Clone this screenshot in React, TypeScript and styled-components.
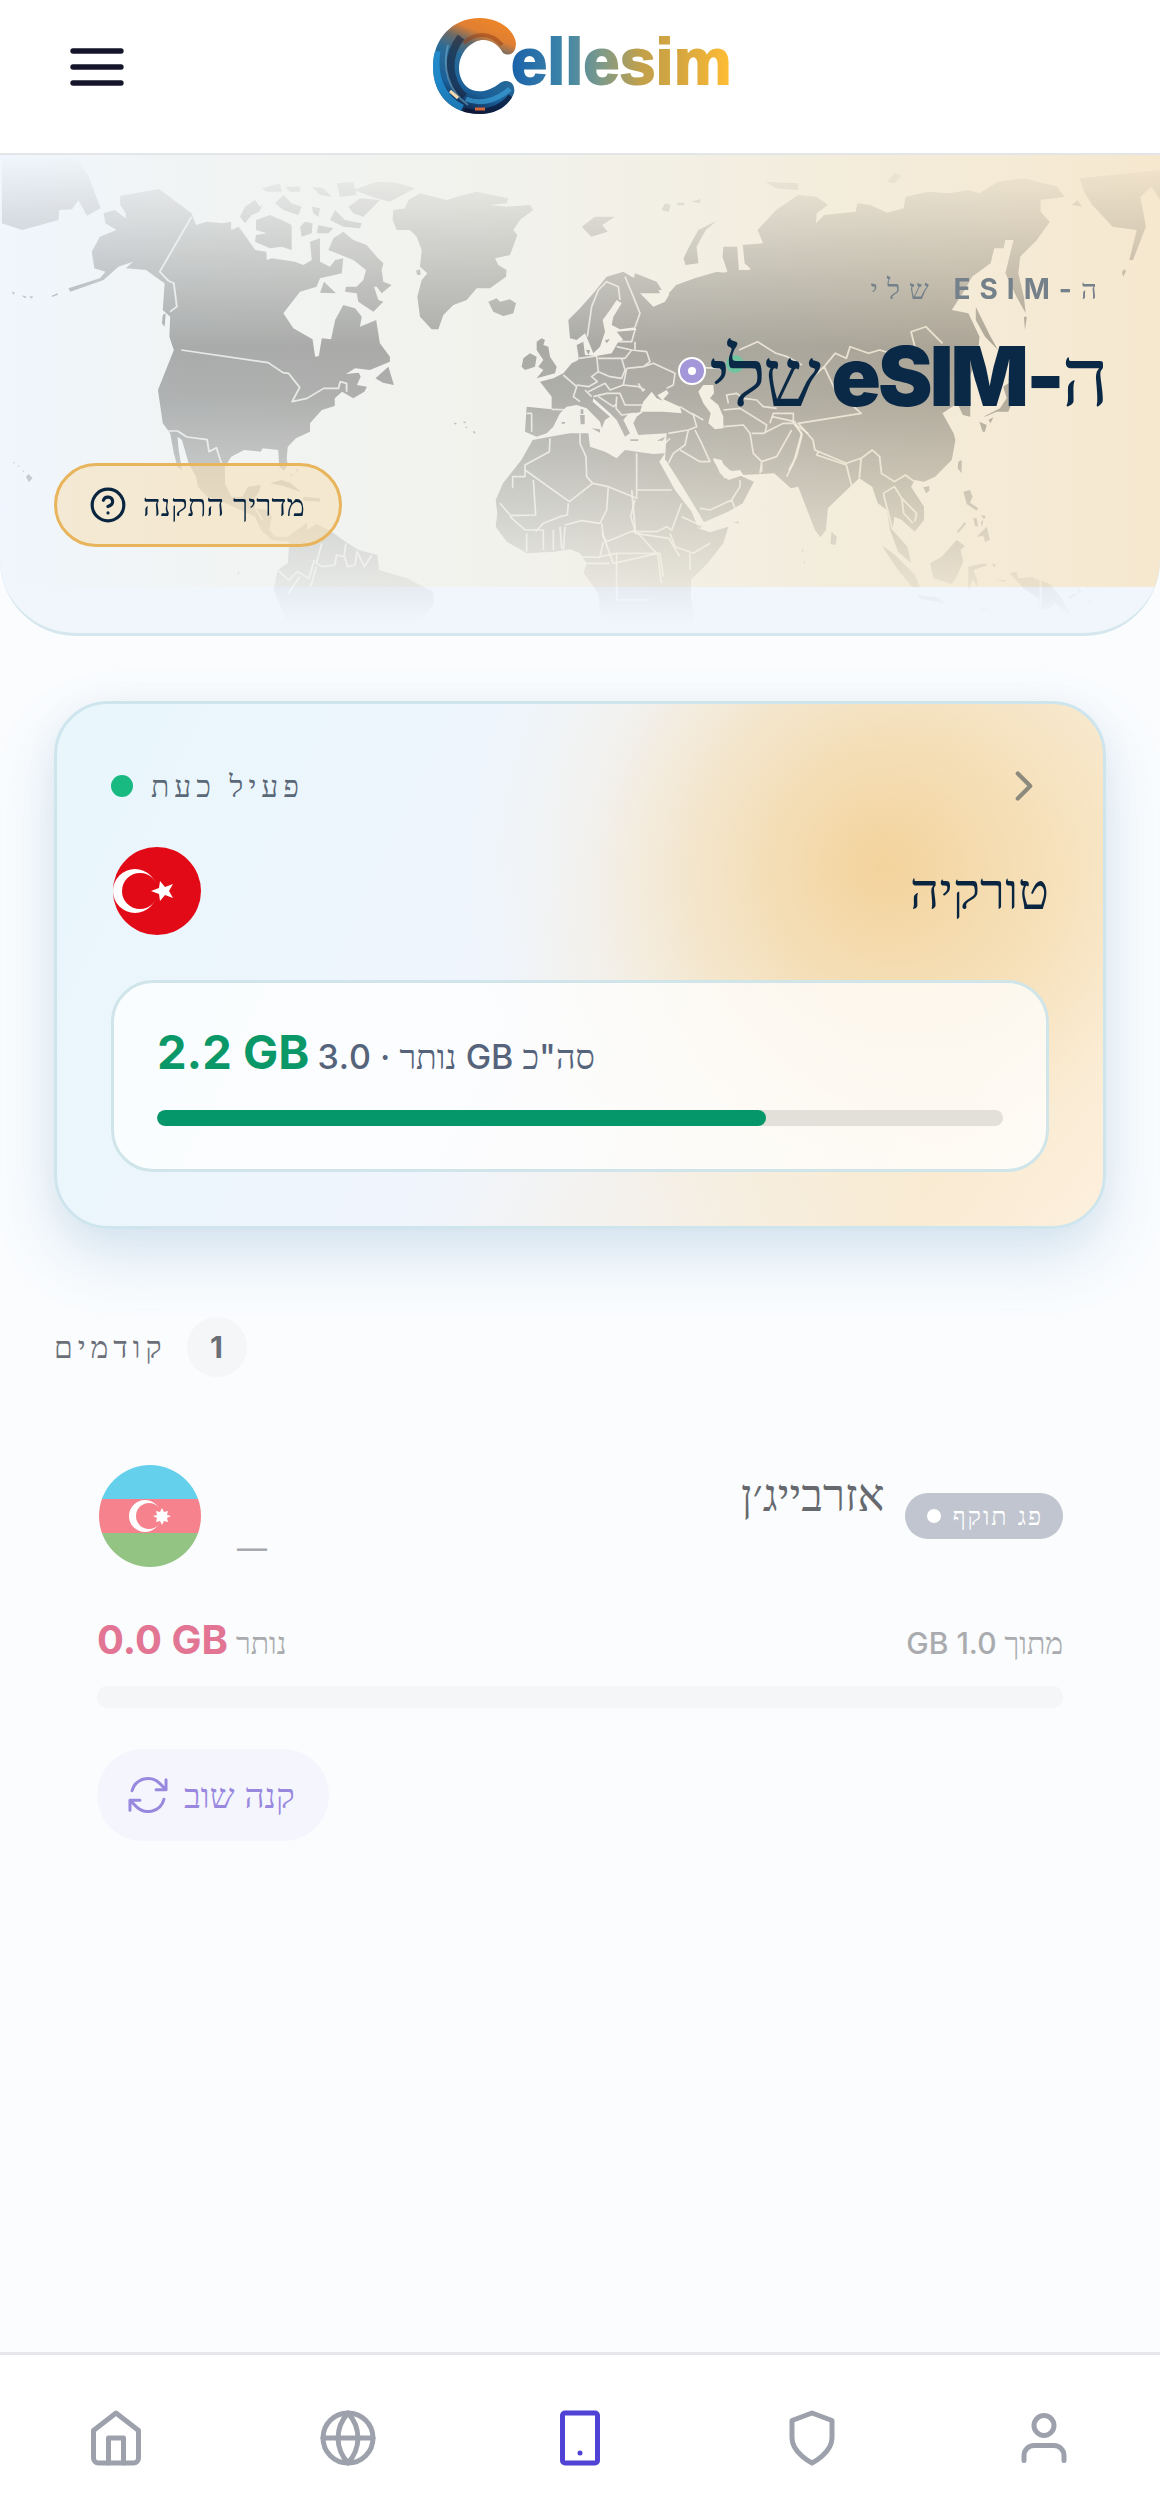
import React from 'react'
import styled, { createGlobalStyle } from 'styled-components'
import { FiMenu, FiHelpCircle, FiChevronRight, FiHome, FiGlobe, FiShield, FiUser } from 'react-icons/fi'
import { HiOutlineArrowPath } from 'react-icons/hi2'

const Logo = () => (
  <svg width="300" height="104" viewBox="0 0 300 104" role="img" aria-label="Cellesim">
    <defs>
      <linearGradient id="ring" x1="0.75" y1="0" x2="0.4" y2="1">
        <stop offset="0" stopColor="#f58a22" />
        <stop offset="0.24" stopColor="#e07f33" />
        <stop offset="0.36" stopColor="#6a6a68" />
        <stop offset="0.5" stopColor="#2a6c98" />
        <stop offset="0.78" stopColor="#1a5f98" />
        <stop offset="1" stopColor="#101c3c" />
      </linearGradient>
      <linearGradient id="word" gradientUnits="userSpaceOnUse" x1="81" y1="0" x2="298" y2="0">
        <stop offset="0" stopColor="#1a62aa" />
        <stop offset="0.25" stopColor="#3f86a8" />
        <stop offset="0.42" stopColor="#7f9a88" />
        <stop offset="0.6" stopColor="#c2a04a" />
        <stop offset="0.8" stopColor="#d9a83e" />
        <stop offset="1" stopColor="#fdbc35" />
      </linearGradient>
      <clipPath id="ringShape">
        <path d="M50 7C68 7 84 18 86 32C86 42 80 46 73 42C67 31 56 26 45 31C27 40 24 64 37 76C47 84 60 80 70 72C78 67 86 72 84 82C79 95 66 103 50 103C20 103 3 82 3 56C3 28 22 7 50 7Z" />
      </clipPath>
    </defs>
    <g clipPath="url(#ringShape)" fill="none">
      <rect width="90" height="104" fill="url(#ring)" />
      <path d="M6 40C2 64 10 88 32 98" stroke="#2196da" strokeWidth="9" opacity="0.75" />
      <path d="M31 26C17 44 16 68 34 86" stroke="#182238" strokeWidth="8" opacity="0.6" />
      <path d="M18 34C12 56 18 80 38 94" stroke="#7fb6cf" strokeWidth="2" opacity="0.5" />
      <path d="M36 88C50 94 66 90 80 78" stroke="#3ba0d8" strokeWidth="5" opacity="0.7" />
      <path d="M34 101C54 106 72 98 82 86" stroke="#0b1130" strokeWidth="8" opacity="0.7" />
      <path d="M34 32C44 22 60 20 72 34" stroke="#8f3c14" strokeWidth="4" opacity="0.5" />
      <path d="M20 80l8 7" stroke="#f3d9b0" strokeWidth="3" />
      <path d="M45 98h10" stroke="#d5673d" strokeWidth="3" />
    </g>
    <LogoText x="81" y="73">ellesim</LogoText>
  </svg>
)

const left = 'translate(0 150) scale(0.36990 0.33333)'
const right = 'translate(580 150) scale(0.36990 0.33333)'
const europe = 'translate(510 270) scale(0.33333)'
const arctic = 'translate(220 170) scale(0.33333)'
const pacific = 'translate(840 380) scale(0.33333)'

const WorldMap = () => (
  <MapSvg viewBox="0 155 1160 480" preserveAspectRatio="xMidYMin slice" aria-hidden="true">
    <defs>
      <linearGradient id="fade" x1="0" y1="0" x2="0" y2="1">
        <stop offset="0" stopColor="#fff" stopOpacity="0" />
        <stop offset="0.08" stopColor="#fff" stopOpacity="0.2" />
        <stop offset="0.4" stopColor="#fff" stopOpacity="1" />
        <stop offset="0.5" stopColor="#fff" stopOpacity="0.92" />
        <stop offset="0.75" stopColor="#fff" stopOpacity="0.42" />
        <stop offset="0.98" stopColor="#fff" stopOpacity="0" />
      </linearGradient>
      <mask id="land" maskUnits="userSpaceOnUse" x="0" y="155" width="1160" height="480">
        <rect x="0" y="155" width="1160" height="480" fill="url(#fade)" />
        {/* borders */}
        <g fill="none" stroke="#000" strokeOpacity="0.85" strokeWidth="5" strokeLinejoin="round">
          <path transform={left} d="M490 600L725 638 765 668 780 670 810 712 790 755 830 745 875 715 915 715 920 695 937 700V725M518 200L432 365 455 392 470 400 478 470 460 485M455 843H480L505 861 560 869 565 905 585 893 600 945M870 1180L855 1240 870 1250 905 1245 910 1215 930 1220 935 1180M930 1215L940 1250 960 1245 965 1205 985 1250 1005 1215M750 1260L780 1290 805 1265 835 1285 850 1230M780 1330L810 1280M690 1075L710 1110M855 1250L840 1310" />
          <g transform={europe}>
            <path d="M120 505L118 545 45 585V620H8V655M45 600L178 695 248 640 230 620 228 560 210 520V490M248 640L295 650 380 685V550M380 660H485M175 700L172 735 150 740 100 760 77 785M70 630L77 735 0 737M295 650L290 720 270 760 215 752 165 765M275 760L280 800 290 815 375 780 362 740 375 690M375 780L440 850M365 785L440 785 470 770 485 780 515 700M515 740L580 770M480 790L495 830 550 850 600 820M280 815L270 860 320 850 450 850 460 920M130 780V840M100 780V840M150 770L155 835M165 770L160 840M0 740L45 780 100 780M50 790V845M540 850V900M320 850V990H420M180 860L270 862M-30 700L0 735" />
            <path d="M205 265L260 258 265 305 245 320 262 335 235 350 200 345M160 315L200 350 190 380 210 395M265 265L335 265 345 300 335 325 300 320 265 305M125 418L190 420M232 200L245 110 265 60 290 35 325 50 330 90M345 20L370 80 390 130 375 172M315 215L365 215 375 180M375 215V238M320 230L365 240 345 265 335 265M365 240L410 245 420 275 400 290 350 295M350 295L340 345M400 290L430 280 495 310 490 345 470 355M235 365L285 340 300 360 340 345 385 350 405 360M250 380L290 370 330 370 345 405 400 405M265 380L310 410 320 400M320 380L318 415 335 435 375 430M225 360L245 380M65 430V485M50 430H65M385 340L400 365" />
            <path d="M475 490L535 480 525 525 490 550 475 580M535 480L560 470 550 435 510 410M510 540L570 575 600 575 575 520 555 480M570 715L600 720 665 690 690 650V630M665 690L675 715M640 470L700 465 720 490 730 550 755 575V605M725 490L760 490 820 460 850 460 895 490M750 610L755 575 800 560 845 480M850 460L875 490 850 580 830 620M655 400L650 375 680 370 700 385 740 390 760 410 800 415M640 420L690 415 770 465 765 490M780 460L790 430 850 430 850 460M545 430L580 450M465 520L480 505" />
          </g>
          <path transform={right} d="M270 650L380 655M430 600L480 575 530 610 560 620 600 645M620 690L660 650 690 610 720 625 730 590 780 610 810 600 870 620 905 590 895 545 935 530 980 580M660 650L690 720 760 790 590 820 630 870 635 900 720 940 760 925 790 900 810 920 815 970 850 995 880 975 910 1000M645 905L640 915 720 945 735 1010M760 925L755 985M820 1030L845 1140M820 1030L850 1010 870 1045 910 1090 905 1115M870 1045L875 1090 900 1120M520 800L580 815 600 855 585 920 565 960M0 1240L80 1240M60 1150L90 1240 210 1210 220 1300M140 1020L150 1150 240 1165 270 1220M1245 1290V1370" />
        </g>
        {/* inland seas */}
        <g fill="#000" transform={europe}>
          <path d="M390 425L400 395 425 365 440 385 458 392 442 376 470 360 476 370 460 388 510 410 515 430 460 425ZM565 365L580 345 610 345 612 370 600 385 625 405 640 440V475L615 478 595 460 602 430 580 400Z" />
          <path d="M610 565L635 570 650 605 690 600 700 615 655 630 630 610Z" />
        </g>
      </mask>
    </defs>
    <g mask="url(#land)" fill="#000" opacity="0.3">
      <g transform={left}>
        <path d="M5 20L205 20 240 80 272 175 235 197 212 150 195 178 160 180 158 210 60 240 5 220Z" />
        <path d="M325 137L430 117 518 190 530 225 560 215 600 220 625 215V240L645 230 665 260 690 300 720 305 721 330 735 325 798 335 820 345 843 330 838 275 865 265V335L892 350 906 330 928 325 924 370 865 385 856 410 811 425 766 490 793 535 845 568 852 620 862 618 870 565 895 568 906 510 928 465 960 475 978 500 973 530 1017 510 1027 580 1054 620V635L1000 660 960 655 935 672 970 668 975 680 965 705 992 710 985 725 955 745 925 725 905 745V768L870 780 838 820V845L800 865 778 890 775 925 778 945 768 962 755 950 752 900 710 895 705 905 660 900 625 920 608 950V1000L625 1040 655 1040 670 1010 705 1005 700 1025 685 1050 690 1075 725 1080 735 1100 728 1140 745 1160 778 1160 830 1118V1140L855 1122 890 1140 940 1180 970 1200 1020 1215 1025 1260 1100 1285 1172 1325V1365L1130 1420 1110 1457H790L770 1400 740 1320 750 1260 778 1240 782 1175 735 1170 705 1140 690 1100 650 1080 610 1060 560 1040 535 1010 530 980 510 940 492 870 480 860 483 900 492 960 480 950 470 910 460 850 440 820 427 720 470 600 458 560 460 500 440 480 445 400 420 380 395 360 340 355 360 335 320 350 280 390 190 425 185 415 270 385 285 365 255 355 248 305 270 260 315 240 285 220 280 190 310 180 340 205V190L325 165Z" />
        <path d="M730 1000L760 990 785 998 815 1027 765 1008ZM820 1040L865 1045V1055L820 1052ZM1015 685L1050 650 1065 705 1035 698ZM460 565L482 583 490 603 470 597ZM70 980L78 972 88 985 78 997ZM440 495L448 490 445 530 438 520ZM140 437L155 430 157 434 140 441ZM58 436L72 440 68 445ZM80 438L90 440 84 446ZM32 424L40 428 36 434ZM35 935l5 3 -2 4zM48 945l5 3 -2 4zM60 960l5 3 -2 4zM785 970l6 6 -3 6zM800 955l6 6 -3 6zM1227 818l8 1 -4 5zM1250 815h10l-2 5zM1257 830h5v6zM1278 843l8 3 -4 5zM643 1262l5 6 -5 8z" />
      </g>
      <g transform={arctic}>
        <path d="M60 140L75 110 105 90 120 110 130 100 118 125 95 135 75 160ZM108 150L150 135 185 150 215 165V240L185 230 150 235 105 215 108 195 140 190 108 180ZM245 200L240 170 255 155 278 160 275 190ZM290 190L295 165 340 175 325 190ZM330 150L345 120 375 150 425 160 420 175 370 170ZM165 100L190 75 215 100 245 110 235 135 190 120ZM125 55L180 40 185 65 140 65ZM350 40L400 35 410 75 360 80ZM385 110L420 85 480 90 460 110 430 140 400 130ZM400 60L470 35 530 38 585 55 510 95 470 85ZM275 50L310 55 335 80 300 75ZM195 50H240V65H210ZM275 110L300 115 295 140 280 130ZM300 368L312 335 348 370Z" />
        <path d="M325 240L340 205 370 185 400 210 440 225 470 260 490 280 485 300 490 335 515 345 485 370 470 350H462L475 390 490 395 460 425 415 395 410 370 375 365 378 350 410 350 430 330 438 300 400 270 350 250Z" />
        <path d="M518 150L520 120 555 115 565 90 600 70 660 85 680 90 730 75 770 65 865 85 860 100 810 105 860 110 930 105 940 120 900 150 880 180 892 195 870 255 840 262 825 265 835 285 860 300 858 320 810 355H770L740 390 700 405 670 435 655 478H635L600 440 592 380 605 330 622 310 600 290 605 240 590 200 570 180 530 180Z" />
        <path d="M805 395L830 385 840 395 870 388 888 400 880 430 850 438 820 425ZM588 302L600 298 602 315 592 315Z" />
      </g>
      <g transform={europe}>
        <path d="M68 510L120 500 180 490 235 490 240 530 285 545 320 565 345 540 380 545 430 552 465 550 448 575 495 660 545 725 565 775 600 787 655 770 640 820 593 880 543 930V980L560 1100H276L265 970 221 910 230 880 210 850 180 838 134 845 51 850 -10 815 -43 770 -38 730 -43 690 -21 640 34 570Z" />
        <path d="M50 410L125 418V380L90 335 130 325 160 310 185 280 205 270V255L200 225 220 215 225 255 260 258 305 250 325 215 340 210 320 185 380 180 375 172 330 178 305 165 310 140 335 100 320 90 300 120 278 150 285 185 270 230 250 250 240 225 225 190 200 210 180 205 175 150 210 115 250 70 290 20 340 5 365 20 440 50 450 70 390 70 430 110 465 95 480 70 520 60 600 20 670 0 900 0V460L700 600 600 560 560 600 465 570 470 490 385 495 370 460 380 440 400 425 355 432 340 450 360 490 345 500 320 450 300 430 250 385 248 395 300 440 285 450 275 475 270 455 230 415 200 405 170 410 150 430 130 470 110 490 80 500 45 485Z" />
        <path d="M95 205L105 210 100 225 115 230 120 260 140 290 135 310 80 325 100 300 85 290 100 270 80 240V215ZM35 290L40 265 60 250 80 260 75 290 45 300ZM210 435H224V463H212ZM212 418H220V432H212ZM245 475L270 478V488ZM360 508L385 508 384 513 362 513ZM440 512L465 500 458 512ZM155 456H165V461H155ZM228 240L240 240 236 255ZM285 210L300 208 290 220ZM375 10L440 35 455 60 400 60 370 35ZM555 765h25l-10 10z" />
      </g>
      <g transform={right}>
        <path d="M240 430L260 405 310 385 370 365 400 370 385 320 388 290 425 290 432 400 448 398 460 355 445 340 440 285 495 280 480 240 530 180 590 135 640 140 670 165 640 190 638 220 660 195 745 185 750 160 785 165 830 188 875 175 880 140 940 125 1000 130 1050 120 1080 130 1130 95 1200 85 1290 110 1310 140 1245 150V185L1270 215 1235 270 1190 320 1185 370 1200 440 1205 490 1180 440 1150 370 1172 270 1150 270 1145 295 1120 295 1110 340 1060 380 1040 420 1005 480 1050 490 1080 560 1075 620 1050 690 1055 760V800L1035 795 1020 760 980 790 1010 850 1015 870 1005 930 960 980 930 995 905 990 895 1010 930 1070V1110L905 1145 870 1110 850 1100 845 1140 885 1190 895 1240 860 1205 838 1140 830 1080 805 1060 790 1010 755 985 730 1010 670 1075 665 1140 650 1162 635 1140 590 1010 570 1015 525 970 440 975 405 960 365 920 360 930 390 985 430 975 470 995 440 1060 400 1085 335 1117 324 1095 280 1015 232 930 240 880 235 850 300 800Z" />
        <path d="M370 212L340 240 315 290 320 340 285 345 280 325 295 290 320 240ZM5 230L40 200 95 200 60 225 75 245 30 260ZM220 180L230 160 245 165 240 185ZM262 158h20v8h-20zM300 155l25 -8v12zM500 95L590 100V120L530 115ZM830 95L850 70 870 75 850 100ZM1350 85L1568 60V150L1545 110 1515 140 1530 230 1495 330H1485L1505 240 1440 230 1385 165 1365 130ZM1070 470L1110 560 1130 600 1095 560 1070 510ZM680 1145L694 1160 691 1185 677 1182ZM1200 500h8l-5 40zM1465 365l8 -8 3 8 -8 15zM415 1118l14 -4v6zM600 1195l5 8 -5 4zM605 1230l5 8 -5 4zM1330 165l15 -15 12 20z" />
      </g>
      <path transform={pacific} d="M430 110L480 85 500 55 490 20 520 0V60L505 95 470 95 440 108ZM418 125L440 135 435 155 428 155ZM445 120L460 112 452 130ZM355 245L365 240V280L353 265ZM250 322L268 318 268 332 258 340ZM370 335L390 330 398 350 390 368 415 385 410 392 380 372ZM400 415H410L415 440 405 438ZM422 405L438 408 432 418ZM422 425L430 420 426 440ZM410 470L440 440 450 480 435 486 430 468ZM350 455L375 425 378 432 355 458ZM270 550L305 530 350 480 375 498 362 510 370 545 350 590 335 612 280 595ZM125 495L165 525 225 585 240 622 215 620 170 565ZM235 645L295 653 320 671 240 656ZM385 560L435 550 442 556 400 570 412 600V622L398 598 385 632ZM510 580L530 575 535 595 575 592 630 612 665 655 695 712 645 670 620 690 600 685 595 655 550 625ZM455 550l15 5 -8 8zM470 600h25v6zM685 650l35 -15 -30 22zM710 618l15 18 -5 2zM740 655l15 18 -5 2zM420 688l35 -6 -30 10z" />
    </g>
    <circle cx="735" cy="364" r="9" fill="#70c4a0" />
    <circle cx="692" cy="371" r="13" fill="#a497d9" stroke="#fff" strokeWidth="2" />
    <circle cx="692" cy="371" r="4" fill="#fff" />
  </MapSvg>
)

const PhoneIcon = () => (
  <svg width="1em" height="1em" viewBox="0 0 24 24" fill="none" stroke="currentColor" strokeWidth="2" strokeLinecap="round" strokeLinejoin="round">
    <rect x="5" y="2" width="14" height="20" rx="1" />
    <path d="M12 18h.01" />
  </svg>
)

const TurkeyFlag = () => (
  <svg width="90" height="90" viewBox="0 0 90 90" role="img" aria-label="Turkey">
    <circle cx="46" cy="45" r="44" fill="#e30a17" />
    <circle cx="24" cy="45" r="22" fill="#fff" />
    <circle cx="29" cy="45" r="18" fill="#e30a17" />
    <path d="M40 45L48 42 49 35 54 41 62 38 58 45 62 52 54 49 49 55 48 48Z" fill="#fff" />
  </svg>
)

const AzerbaijanFlag = () => (
  <svg width="104" height="104" viewBox="0 0 104 104" role="img" aria-label="Azerbaijan">
    <defs>
      <clipPath id="disc"><circle cx="53" cy="52" r="51" /></clipPath>
    </defs>
    <g clipPath="url(#disc)">
      <rect width="104" height="35" fill="#65d0ec" />
      <rect y="35" width="104" height="34" fill="#f5828d" />
      <rect y="69" width="104" height="35" fill="#94c484" />
    </g>
    <circle cx="48" cy="52" r="16" fill="#fff" />
    <circle cx="52" cy="52" r="13" fill="#f5828d" />
    <path d="M65 44l2 4 4-1-1 4 4 1-4 2 1 4-4-1-2 4-2-4-4 1 1-4-4-2 4-1-1-4 4 1z" fill="#fff" />
  </svg>
)

const tabs = [
  { label: 'Home', icon: <FiHome /> },
  { label: 'Destinations', icon: <FiGlobe /> },
  { label: 'My eSIM', icon: <PhoneIcon />, active: true },
  { label: 'Security', icon: <FiShield /> },
  { label: 'Profile', icon: <FiUser /> },
]

const App = () => {
  return (
    <Page lang="he">
      <GlobalStyle />
      <Header>
        <MenuButton aria-label="Menu"><FiMenu /></MenuButton>
        <Logo />
        <span />
      </Header>

      <Hero>
        <WorldMap />
        <HeroText dir="rtl">
          <Eyebrow><Heb>ה</Heb>-ESIM <Heb>שלי</Heb></Eyebrow>
          <Title><Heb>ה</Heb>-eSIM <Heb>שלי</Heb></Title>
        </HeroText>
        <GuideButton>
          <FiHelpCircle />
          <Heb>מדריך התקנה</Heb>
        </GuideButton>
      </Hero>

      <Main>
        <ActiveCard>
          <CardTop>
            <Status><Dot $size={22} $color="#19ba82" /><Spaced>פעיל כעת</Spaced></Status>
            <IconButton aria-label="Open"><FiChevronRight /></IconButton>
          </CardTop>
          <CardCountry>
            <TurkeyFlag />
            <CountryName>טורקיה</CountryName>
          </CardCountry>
          <UsageBox>
            <Usage>
              <Amount $color="#0a9868" $size={47}>2.2 GB</Amount>
              <UsageNote dir="rtl">סה"כ GB נותר · 3.0</UsageNote>
            </Usage>
            <Bar $height={16} $track="#e3e0da"><BarFill style={{ width: `${(2.16 / 3) * 100}%` }} /></Bar>
          </UsageBox>
        </ActiveCard>

        <SectionTitle>
          <Spaced $color="#6b6f78">קודמים</Spaced>
          <Count>1</Count>
        </SectionTitle>

        <PastItem>
          <PastTop>
            <AzerbaijanFlag />
            <Dash>—</Dash>
            <PastName>אזרבייג׳ן</PastName>
            <Expired><Dot $size={14} $color="#fff" />פג תוקף</Expired>
          </PastTop>
          <PastUsage>
            <Usage>
              <Amount $color="#e27594" $size={40}>0.0 GB</Amount>
              <Muted>נותר</Muted>
            </Usage>
            <Muted dir="rtl">מתוך <bdi>GB 1.0</bdi></Muted>
          </PastUsage>
          <Bar $height={22} $track="#f5f6f8" />
          <BuyAgain><HiOutlineArrowPath /><Heb>קנה שוב</Heb></BuyAgain>
        </PastItem>
      </Main>

      <TabBar>
        {tabs.map((tab) => (
          <Tab key={tab.label} href="#" aria-label={tab.label} $active={tab.active}>{tab.icon}</Tab>
        ))}
      </TabBar>
    </Page>
  )
}

export default App

const GlobalStyle = createGlobalStyle`
*{
  box-sizing: border-box;
}
body{
  margin: 0;
  background: #fafcfe;
}
button{
  border: 0;
  padding: 0;
  background: none;
  font: inherit;
  cursor: pointer;
}
`
const Page = styled.div`
display: flex;
flex-direction: column;
min-height: 100vh;
font-family: Inter, "Liberation Serif", serif;
color: #0a2540;
`
const LogoText = styled.text`
font-family: "Liberation Sans", sans-serif;
font-size: 65px;
font-weight: 700;
fill: url(#word);
stroke: url(#word);
stroke-width: 2px;
`
const Heb = styled.span`
font-weight: 400;
`
const Header = styled.header`
display: grid;
grid-template-columns: 1fr auto 1fr;
align-items: start;
height: 155px;
padding: 11px 65px 0;
background: #fff;
border-bottom: 2px solid #e3e6e9;
`
const MenuButton = styled.button`
display: flex;
width: 64px;
padding-top: 24px;
color: #14142b;
font-size: 64px;
`
const Hero = styled.section`
position: relative;
display: flex;
flex-direction: column;
justify-content: space-between;
height: 481px;
padding: 114px 54px 86px;
overflow: hidden;
border-bottom: 3px solid #d5e7ee;
border-radius: 0 0 76px 76px;
background:
  linear-gradient(90deg, #f0f6fd 0%, #f1f4f4 16%, #f2f2ec 45%, #f3eddd 70%, #f6e8cf 100%) 0 0 / 100% 432px no-repeat,
  #f0f6fc;
`
const MapSvg = styled.svg`
position: absolute;
inset: 0;
width: 100%;
height: 100%;
`
const HeroText = styled.div`
position: relative;
`
const Eyebrow = styled.p`
margin: 0;
font-size: 28px;
font-weight: 700;
line-height: 40px;
letter-spacing: 9px;
color: #75818a;
`
const Title = styled.h1`
margin: 20px 0 0;
font-size: 82px;
font-weight: 900;
line-height: 96px;
letter-spacing: -3px;
color: #0a2947;
`
const GuideButton = styled.button`
position: relative;
display: flex;
align-items: center;
align-self: flex-start;
gap: 16px;
height: 84px;
padding: 0 34px 0 32px;
border: 3px solid #e8b45c;
border-radius: 42px;
background: rgba(246, 222, 180, 0.55);
color: #0a2540;
font-size: 31px;

svg{
  width: 38px;
  height: 38px;
}
`
const Main = styled.main`
display: flex;
flex: 1;
flex-direction: column;
padding: 65px 54px 0;
`
const ActiveCard = styled.section`
display: flex;
flex-direction: column;
padding: 54px;
border: 3px solid #cfe5ee;
border-radius: 54px;
background:
  radial-gradient(circle 420px at 79% 31%, rgba(243, 208, 148, 0.9), rgba(244, 214, 160, 0.6) 35%, rgba(248, 230, 195, 0.25) 70%, rgba(248, 230, 195, 0) 100%),
  linear-gradient(115deg, #e8f6fc 0%, #f0f5fd 45%, #f9ecd6 85%, #fdf0de 100%);
box-shadow: 0 28px 60px rgba(110, 165, 205, 0.24), 0 4px 30px rgba(120, 130, 140, 0.07);
`
const CardTop = styled.div`
display: flex;
align-items: center;
justify-content: space-between;
height: 56px;
`
const Status = styled.div`
display: flex;
align-items: center;
gap: 18px;
`
const Dot = styled.span<{ $size: number; $color: string }>`
flex: none;
width: ${(p) => p.$size}px;
height: ${(p) => p.$size}px;
border-radius: 50%;
background: ${(p) => p.$color};
`
const Spaced = styled.span<{ $color?: string }>`
font-size: 30px;
line-height: 40px;
letter-spacing: 5px;
color: ${(p) => p.$color || '#5b6878'};
`
const IconButton = styled.button`
display: flex;
color: #8c8a7c;
font-size: 50px;
`
const CardCountry = styled.div`
display: flex;
align-items: center;
justify-content: space-between;
height: 90px;
margin: 32px 0 44px;
`
const CountryName = styled.h2`
margin: 0;
font-size: 51px;
font-weight: 400;
line-height: 64px;
`
const UsageBox = styled.div`
display: flex;
flex-direction: column;
gap: 32px;
padding: 43px;
border: 3px solid #cfe5e9;
border-radius: 42px;
background: rgba(255, 255, 255, 0.75);
`
const Usage = styled.div`
display: flex;
align-items: baseline;
gap: 8px;
`
const Amount = styled.strong<{ $color: string; $size: number }>`
font-size: ${(p) => p.$size}px;
font-weight: 700;
line-height: 52px;
color: ${(p) => p.$color};
`
const UsageNote = styled.span`
font-size: 34px;
font-weight: 500;
line-height: 40px;
color: #56647b;
`
const Bar = styled.div<{ $height: number; $track: string }>`
height: ${(p) => p.$height}px;
overflow: hidden;
border-radius: 10px;
background: ${(p) => p.$track};
`
const BarFill = styled.div`
height: 100%;
border-radius: 10px;
background: #059669;
`
const SectionTitle = styled.div`
display: flex;
align-items: center;
gap: 20px;
margin-top: 88px;
`
const Count = styled.span`
display: grid;
place-items: center;
width: 60px;
height: 60px;
border-radius: 50%;
background: #f5f6f7;
font-size: 30px;
font-weight: 700;
color: #6b6f78;
`
const PastItem = styled.article`
display: flex;
flex-direction: column;
padding: 87px 43px 0;
`
const PastTop = styled.div`
display: flex;
align-items: center;
height: 104px;
`
const Dash = styled.span`
flex: 1;
align-self: flex-end;
padding-left: 36px;
font-size: 30px;
line-height: 40px;
color: #a6a9ad;
`
const PastName = styled.h3`
align-self: flex-start;
margin: 0 20px 0 0;
font-size: 45px;
font-weight: 400;
line-height: 62px;
color: #66696d;
`
const Expired = styled.span`
display: flex;
align-items: center;
gap: 12px;
height: 46px;
padding: 0 20px 0 22px;
border-radius: 23px;
background: #c0c5cf;
font-size: 25px;
letter-spacing: 2px;
color: #fff;
`
const PastUsage = styled.div`
display: flex;
align-items: baseline;
justify-content: space-between;
margin: 46px 0 20px;
`
const Muted = styled.span`
font-size: 30px;
font-weight: 500;
line-height: 40px;
color: #a9abae;
`
const BuyAgain = styled.button`
display: flex;
align-items: center;
align-self: flex-start;
gap: 12px;
height: 92px;
margin-top: 41px;
padding: 0 34px 0 27px;
border-radius: 46px;
background: #f5f5fe;
color: #9889de;
font-size: 35px;

svg{
  width: 48px;
  height: 48px;
}
`
const TabBar = styled.nav`
display: flex;
height: 162px;
padding-top: 53px;
border-top: 3px solid #e5e7ea;
background: #fff;
`
const Tab = styled.a<{ $active?: boolean }>`
display: flex;
flex: 1;
justify-content: center;
font-size: 60px;
color: ${(p) => (p.$active ? '#4f42d4' : '#9ca1ac')};
`
